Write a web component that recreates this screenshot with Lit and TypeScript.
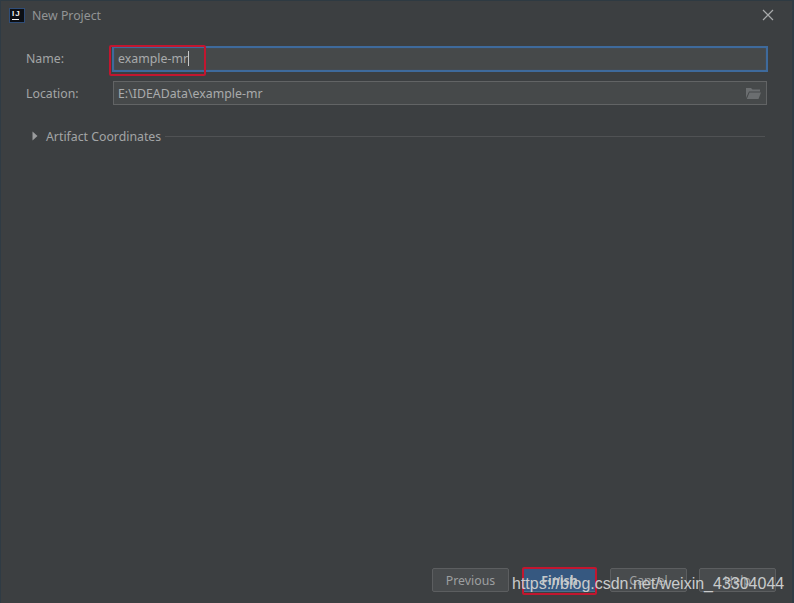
import {css, html, LitElement} from 'lit';
import {customElement} from 'lit/decorators.js';

@customElement('app-root')
export class AppRoot extends LitElement {
    static get styles() {
        //language=CSS
        return css`
            :host {
                display: block;
                position: relative;
                width: 794px;
                height: 603px;
                overflow: hidden;
                background: #2f3b44;
                font-family: "Noto Sans", "Open Sans", sans-serif;
                font-size: 12.3px;
                color: #a3a5a6;
            }

            .window {
                box-sizing: border-box;
                display: flex;
                flex-direction: column;
                width: 791px;
                height: 603px;
                margin-left: 1px;
                padding-top: 1px;
                background: #3c3f41;
                border-top: 1px solid #2e3a42;
            }

            .title {
                display: flex;
                align-items: center;
                height: 26px;
                padding: 0 18px 0 8px;
                gap: 7px;
                flex: none;
            }

            .logo {
                flex: none;
                display: flex;
                flex-direction: column;
                box-sizing: border-box;
                width: 16px;
                height: 15px;
                padding: 1px 2px;
                background: #0c0f14;
                border: 1px solid #2f4d78;
                color: #f2f2f2;
                font: bold 8px/7px "Liberation Sans", sans-serif;
                letter-spacing: 1px;
            }

            .logo i {
                display: block;
                width: 7px;
                height: 1px;
                margin-top: 2px;
                background: #f2f2f2;
            }

            .title-text {
                flex: 1;
                color: #929495;
            }

            .close {
                flex: none;
                display: block;
            }

            .form {
                flex: 1;
                display: flex;
                flex-direction: column;
                padding: 18px 24px 0 25px;
            }

            .row {
                display: grid;
                grid-template-columns: 86px 1fr;
                align-items: center;
            }

            .row + .row {
                margin-top: 9px;
            }

            .row.first > span {
                margin-top: -2px;
            }

            .input {
                box-sizing: border-box;
                display: flex;
                align-items: center;
                padding-left: 4px;
                background: #46494a;
                color: #a9abac;
                height: 24px;
                margin: 0 1px;
                border: 1px solid #626465;
                letter-spacing: 0.02px;
            }

            .input.focus {
                height: 26px;
                margin: 0;
                padding: 0 0 1px 4px;
                border: 2px solid #3e6a9c;
                box-shadow: inset 0 0 1px #3e6a9c;
            }

            .caret {
                width: 1px;
                height: 15px;
                background: #c6c8c9;
            }

            .folder {
                display: block;
                margin-left: auto;
                margin-right: 5px;
            }

            .section {
                display: flex;
                align-items: center;
                gap: 4px;
                margin: 21px 3px 0 6px;
                height: 20px;
            }

            .section svg {
                flex: none;
                margin-right: 4px;
            }

            .section span {
                flex: none;
            }

            .section b {
                flex: 1;
                height: 1px;
                background: #505254;
            }

            .footer {
                display: flex;
                justify-content: flex-end;
                gap: 13px;
                margin-top: auto;
                padding: 0 16px 11px 0;
            }

            .btn {
                box-sizing: border-box;
                width: 77px;
                height: 24px;
                display: flex;
                align-items: center;
                justify-content: center;
                background: #484b4d;
                border: 1px solid #5c5e60;
                border-radius: 2px;
                color: #9d9fa0;
            }

            .btn:last-child {
                margin-left: -1px;
            }

            .btn.primary {
                width: 75px;
                background: #365880;
                border-color: #4c708c;
                color: #c4c7c9;
                font-weight: bold;
            }

            .mark {
                position: absolute;
                box-sizing: border-box;
                border: 2px solid #c2162f;
                border-radius: 2px;
            }

            .mark.name {
                left: 109px;
                top: 45px;
                width: 97px;
                height: 31px;
            }

            .mark.finish {
                left: 522px;
                top: 567px;
                width: 75px;
                height: 28px;
            }

            .watermark {
                position: absolute;
                left: 512px;
                top: 573px;
                font: 16px/22px "Liberation Sans", sans-serif;
                color: #c9cbcc;
                white-space: nowrap;
            }
        `;
    }

    protected render() {
        return html`
            <div class="window">
                <div class="title">
                    <div class="logo">IJ<i></i></div>
                    <span class="title-text">New Project</span>
                    <svg class="close" width="12" height="12" viewBox="0 0 12 12">
                        <path d="M1 1L11 11M11 1L1 11" stroke="#a8aaab" stroke-width="1.2" fill="none"/>
                    </svg>
                </div>
                <div class="form">
                    <div class="row first">
                        <span>Name:</span>
                        <div class="input focus">example-mr<span class="caret"></span></div>
                    </div>
                    <div class="row">
                        <span>Location:</span>
                        <div class="input">
                            E:\\IDEAData\\example-mr
                            <svg class="folder" width="15" height="13" viewBox="0 0 15 13">
                                <path d="M0 1h5l1.500 1.500H14V4.500H3L0 11z M3.500 5.500H15L12.500 12H0.800z" fill="#6b6e70"/>
                            </svg>
                        </div>
                    </div>
                    <div class="section">
                        <svg width="6" height="10" viewBox="0 0 6 10"><path d="M0.500 0.500L5.500 5L0.500 9.500z" fill="#9a9c9d"/></svg>
                        <span>Artifact Coordinates</span>
                        <b></b>
                    </div>
                </div>
                <div class="footer">
                    <div class="btn">Previous</div>
                    <div class="btn primary">Finish</div>
                    <div class="btn">Cancel</div>
                    <div class="btn">Help</div>
                </div>
            </div>
            <div class="mark name"></div>
            <div class="mark finish"></div>
            <div class="watermark">https://blog.csdn.net/weixin_43304044</div>
        `;
    }
}
